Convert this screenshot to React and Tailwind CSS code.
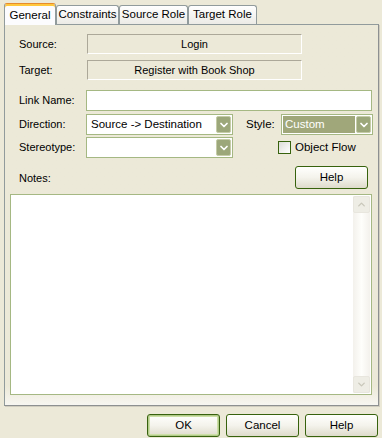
import { ChevronDown, ChevronUp } from "lucide-react";

const font = { fontFamily: '"Liberation Sans", Arial, sans-serif' };

function DropButton() {
  return (
    <div className="flex h-[17px] w-[15px] items-center justify-center rounded-[2px] border border-[#c5cca7] bg-[#9ca77a]">
      <ChevronDown className="h-[12px] w-[12px] text-white" strokeWidth={3.5} />
    </div>
  );
}

function XpButton({ children, def, className = "" }) {
  return (
    <button
      className={`flex h-[23px] w-[73px] items-center justify-center rounded-[3px] border border-[#37620d] bg-gradient-to-b from-[#fffffd] via-[#f4f3ec] to-[#dedbcb] text-[11.5px] text-black ${
        def ? "shadow-[inset_0_0_0_1px_#b1c989,inset_0_0_0_2px_#cde0a7]" : ""
      } ${className}`}
    >
      {children}
    </button>
  );
}

function Tab({ label, active, width }) {
  if (active) {
    return (
      <div
        className="relative z-10 -mb-px flex h-[22px] items-start justify-center rounded-t-[3px] border border-b-0 border-[#919b9c] border-t-[#e68b2c] bg-[#fcfcfe] pt-[3px] text-[11.5px] shadow-[inset_0_2px_0_#ffc73c]"
        style={{ width }}
      >
        {label}
      </div>
    );
  }
  return (
    <div
      className="flex h-[19px] items-center justify-center rounded-t-[3px] border border-b-0 border-[#919b9c] bg-gradient-to-b from-white to-[#ecebe6] text-[11.5px]"
      style={{ width }}
    >
      {label}
    </div>
  );
}

function ReadField({ value }) {
  return (
    <div className="flex h-[20px] w-[215px] items-center justify-center border border-[#aca899] border-b-white border-r-white bg-[#ece9d8] text-[11px]">
      {value}
    </div>
  );
}

export default function App() {
  return (
    <div className="h-[438px] w-[382px] overflow-hidden bg-[#ece9d8] text-black" style={font}>
      <div className="flex items-end pl-[4px] pt-[3px]">
        <Tab label="General" active width={52} />
        <Tab label="Constraints" width={63} />
        <Tab label="Source Role" width={69} />
        <Tab label="Target Role" width={69} />
      </div>

      <div className="relative ml-[4px] h-[382px] w-[375px] border border-[#919b9c] border-b-[#8d9091] border-r-[#8d9091] bg-gradient-to-b from-[#ece9d8] via-[#ece9d8] via-[95%] to-[#f7f6f1] shadow-[1px_1px_0_#d0cdbf]">
        <div className="pl-[14px] pt-[9px] text-[11px]">
          <div className="flex items-center">
            <div className="w-[68px]">Source:</div>
            <ReadField value="Login" />
          </div>
          <div className="mt-[6px] flex items-center">
            <div className="w-[68px]">Target:</div>
            <ReadField value="Register with Book Shop" />
          </div>

          <div className="mt-[10px] flex items-center">
            <div className="w-[67px]">Link Name:</div>
            <div className="h-[21px] w-[286px] border border-[#a5b883] bg-white" />
          </div>

          <div className="mt-[3px] flex items-center">
            <div className="w-[67px]">Direction:</div>
            <div className="flex h-[21px] w-[147px] items-center justify-between border border-[#a5b883] bg-white pl-[4px] pr-[1px] text-[11.5px]">
              <span>Source -&gt; Destination</span>
              <DropButton />
            </div>
            <div className="ml-[13px] w-[35px] text-[11.5px]">Style:</div>
            <div className="flex h-[21px] w-[92px] items-center justify-between border border-[#a5b883] bg-white p-[1px]">
              <div className="flex h-full flex-1 items-center bg-[#a0a77a] pl-[2px] text-[11.5px] text-white">
                Custom
              </div>
              <div className="ml-[1px]">
                <DropButton />
              </div>
            </div>
          </div>

          <div className="mt-[2px] flex items-center">
            <div className="w-[67px]">Stereotype:</div>
            <div className="flex h-[21px] w-[147px] items-center justify-end border border-[#a5b883] bg-white pr-[1px]">
              <DropButton />
            </div>
            <div className="ml-[45px] flex items-center gap-[4px] text-[11.5px]">
              <div className="h-[13px] w-[13px] border border-[#37620d] bg-gradient-to-br from-[#dcdcd7] to-white" />
              <span>Object Flow</span>
            </div>
          </div>

          <div className="mt-[8px] flex items-end">
            <div className="mb-[3px] w-[276px]">Notes:</div>
            <XpButton className="h-[22px]">Help</XpButton>
          </div>
        </div>

        <div className="ml-[5px] mt-[5px] flex h-[201px] w-[362px] border border-[#a5b883] bg-white p-[1px]">
          <div className="flex-1" />
          <div className="flex w-[17px] flex-col bg-gradient-to-r from-[#f3f1ec] via-[#fefefb] to-[#f3f1ec]">
            <div className="flex h-[17px] items-center justify-center rounded-[2px] border border-[#e8e6de] bg-[#eeede5]">
              <ChevronUp className="h-[11px] w-[11px] text-[#c9c7ba]" strokeWidth={3} />
            </div>
            <div className="flex-1" />
            <div className="flex h-[17px] items-center justify-center rounded-[2px] border border-[#e8e6de] bg-[#eeede5]">
              <ChevronDown className="h-[11px] w-[11px] text-[#c9c7ba]" strokeWidth={3} />
            </div>
          </div>
        </div>
      </div>

      <div className="mt-[8px] flex justify-end gap-[6px] pr-[4px]">
        <XpButton def>OK</XpButton>
        <XpButton>Cancel</XpButton>
        <XpButton>Help</XpButton>
      </div>
    </div>
  );
}
